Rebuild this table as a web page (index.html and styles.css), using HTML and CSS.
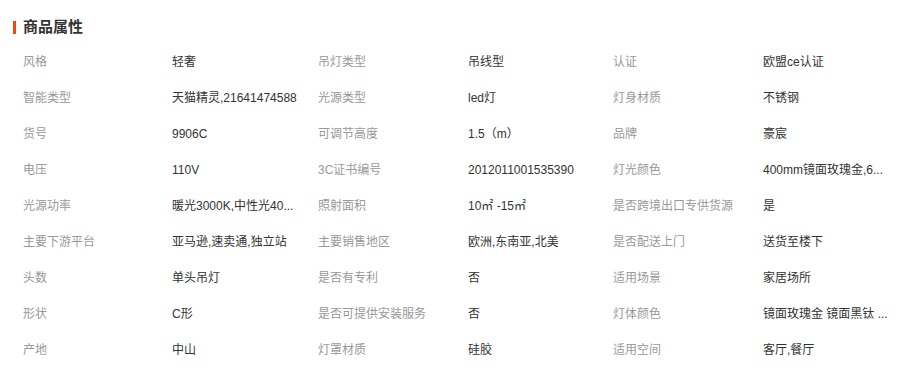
FILE: index.html
```html
<!DOCTYPE html>
<html lang="zh-CN">
<head>
<meta charset="utf-8">
<title>商品属性</title>
<link rel="stylesheet" href="styles.css">
</head>
<body>
<section class="attrs">
  <h2 class="attrs-title"><span class="attrs-bar"></span>商品属性</h2>
  <div class="attrs-grid">
    <div class="k">风格</div><div class="v">轻奢</div>
    <div class="k">吊灯类型</div><div class="v">吊线型</div>
    <div class="k">认证</div><div class="v">欧盟ce认证</div>

    <div class="k">智能类型</div><div class="v">天猫精灵,21641474588</div>
    <div class="k">光源类型</div><div class="v">led灯</div>
    <div class="k">灯身材质</div><div class="v">不锈钢</div>

    <div class="k">货号</div><div class="v">9906C</div>
    <div class="k">可调节高度</div><div class="v">1.5（m）</div>
    <div class="k">品牌</div><div class="v">豪宸</div>

    <div class="k">电压</div><div class="v">110V</div>
    <div class="k">3C证书编号</div><div class="v">2012011001535390</div>
    <div class="k">灯光颜色</div><div class="v">400mm镜面玫瑰金,6...</div>

    <div class="k">光源功率</div><div class="v">暖光3000K,中性光40...</div>
    <div class="k">照射面积</div><div class="v">10㎡ -15㎡</div>
    <div class="k">是否跨境出口专供货源</div><div class="v">是</div>

    <div class="k">主要下游平台</div><div class="v">亚马逊,速卖通,独立站</div>
    <div class="k">主要销售地区</div><div class="v">欧洲,东南亚,北美</div>
    <div class="k">是否配送上门</div><div class="v">送货至楼下</div>

    <div class="k">头数</div><div class="v">单头吊灯</div>
    <div class="k">是否有专利</div><div class="v">否</div>
    <div class="k">适用场景</div><div class="v">家居场所</div>

    <div class="k">形状</div><div class="v">C形</div>
    <div class="k">是否可提供安装服务</div><div class="v">否</div>
    <div class="k">灯体颜色</div><div class="v">镜面玫瑰金 镜面黑钛 ...</div>

    <div class="k">产地</div><div class="v">中山</div>
    <div class="k">灯罩材质</div><div class="v">硅胶</div>
    <div class="k">适用空间</div><div class="v">客厅,餐厅</div>
  </div>
</section>
</body>
</html>
```

FILE: styles.css
```css
html, body {
  margin: 0;
  padding: 0;
  background: #fff;
}

body {
  font-family: "Liberation Sans", "Noto Sans CJK SC", sans-serif;
  font-size: 12px;
  color: #333;
}

.attrs {
  padding-top: 18px;
}

.attrs-title {
  display: flex;
  align-items: center;
  gap: 7px;
  margin: 0;
  padding-left: 13px;
  height: 18px;
  font-size: 15px;
  font-weight: bold;
  line-height: 18px;
  color: #333;
}

.attrs-bar {
  display: block;
  width: 3px;
  height: 13px;
  background: #ff4400;
}

.attrs-grid {
  display: grid;
  grid-template-columns: 149px 146px 150px 145px 150px 145px;
  grid-auto-rows: 36px;
  padding-left: 23px;
  margin-top: 8px;
}

.k, .v {
  line-height: 36px;
  white-space: nowrap;
  overflow: hidden;
}

.k {
  color: #999;
}

.v {
  color: #333;
}
```
